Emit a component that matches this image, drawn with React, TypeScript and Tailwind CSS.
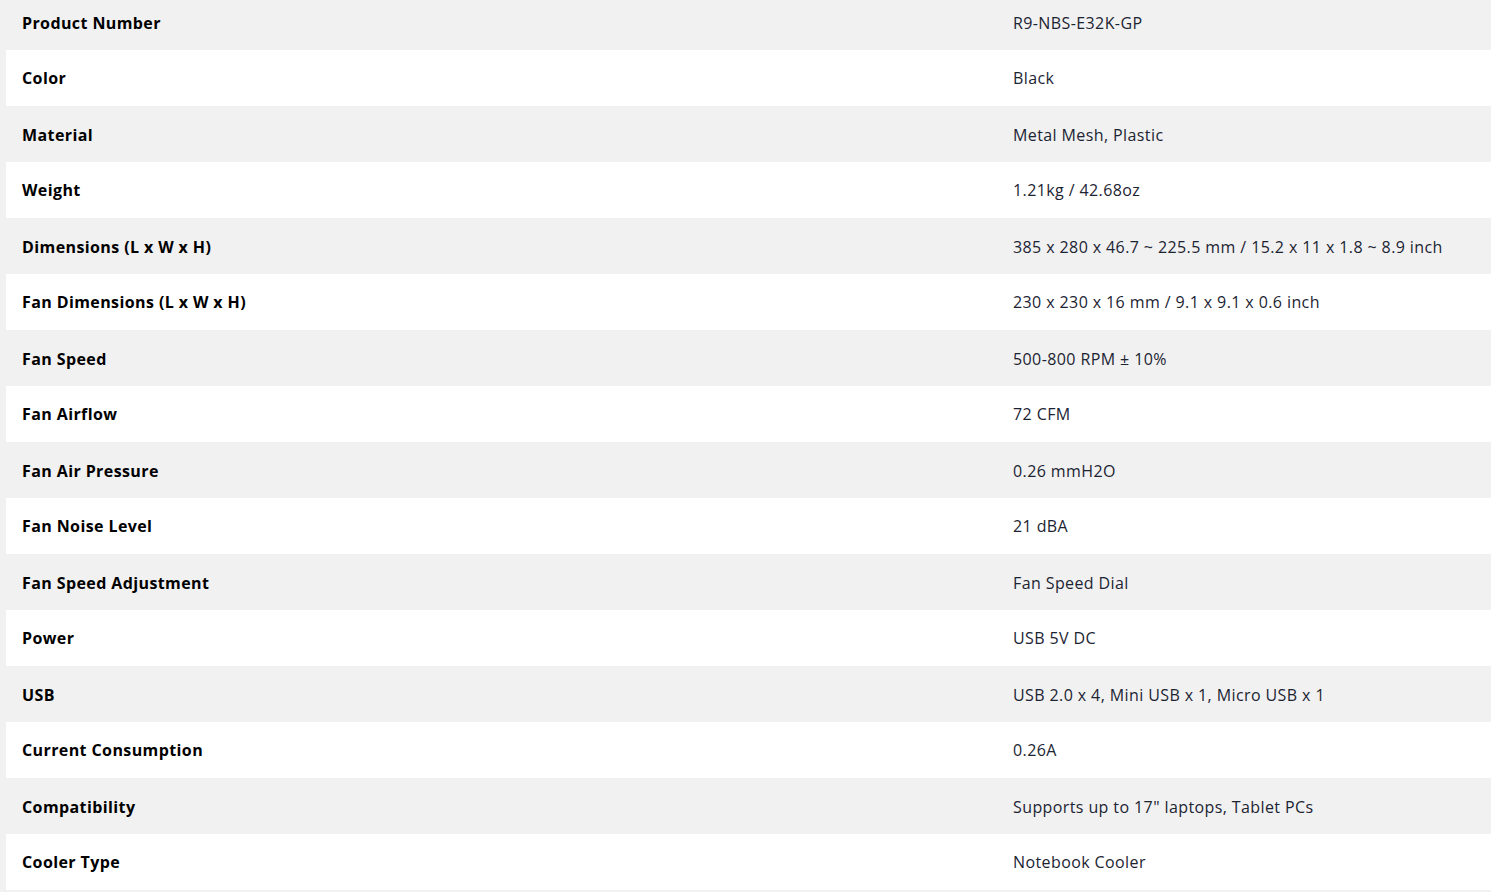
import React from "react";

const rows: [string, string][] = [
  ["Product Number", "R9-NBS-E32K-GP"],
  ["Color", "Black"],
  ["Material", "Metal Mesh, Plastic"],
  ["Weight", "1.21kg / 42.68oz"],
  ["Dimensions (L x W x H)", "385 x 280 x 46.7 ~ 225.5 mm / 15.2 x 11 x 1.8 ~ 8.9 inch"],
  ["Fan Dimensions (L x W x H)", "230 x 230 x 16 mm / 9.1 x 9.1 x 0.6 inch"],
  ["Fan Speed", "500-800 RPM ± 10%"],
  ["Fan Airflow", "72 CFM"],
  ["Fan Air Pressure", "0.26 mmH2O"],
  ["Fan Noise Level", "21 dBA"],
  ["Fan Speed Adjustment", "Fan Speed Dial"],
  ["Power", "USB 5V DC"],
  ["USB", "USB 2.0 x 4, Mini USB x 1, Micro USB x 1"],
  ["Current Consumption", "0.26A"],
  ["Compatibility", "Supports up to 17\" laptops, Tablet PCs"],
  ["Cooler Type", "Notebook Cooler"],
];

export default function App() {
  return (
    <div
      className="min-h-screen w-full overflow-hidden bg-[#f1f1f1] pl-[6px]"
      style={{ fontFamily: '"Open Sans", "Noto Sans", sans-serif' }}
    >
      <div className="-mt-[6px] flex flex-col">
        {rows.map(([k, v], i) => (
          <div
            key={k}
            className={`flex h-[56px] items-center text-[16px] tracking-[0.4px] ${i % 2 === 0 ? "bg-[#f1f1f1] pt-[2px]" : "bg-white"}`}
          >
            <div className="w-[991px] shrink-0 pl-4 font-bold text-black">{k}</div>
            <div className="flex-1 pl-4 text-[#1c2433]">{v}</div>
          </div>
        ))}
      </div>
    </div>
  );
}
